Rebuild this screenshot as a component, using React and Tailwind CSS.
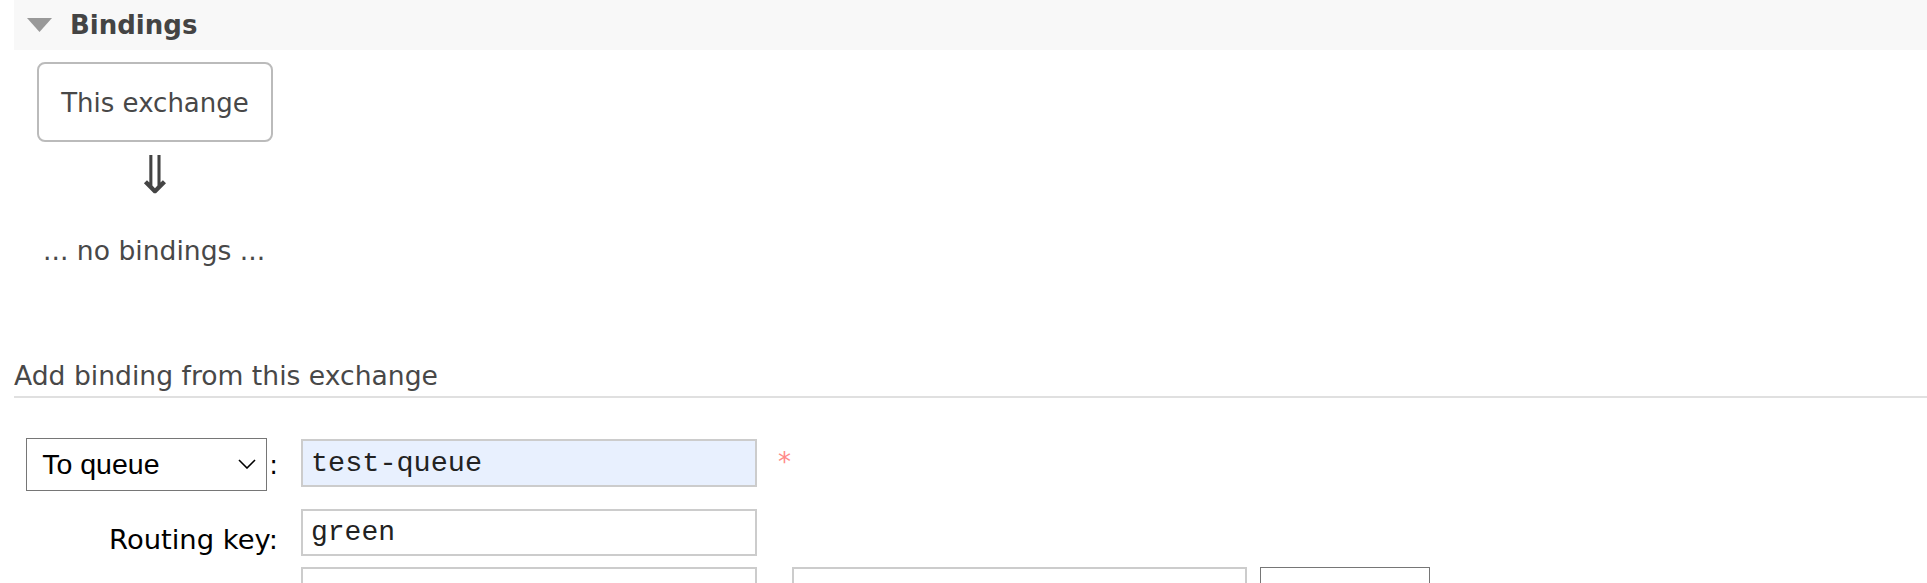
import React, { useState } from 'react';

const Chevron = () => (
  <svg width="18" height="10" viewBox="0 0 18 10" className="pointer-events-none absolute right-[11px] top-[21px]">
    <polyline points="1,1 9,9 17,1" fill="none" stroke="#000" strokeWidth="1.6" />
  </svg>
);

const App = () => {
  const [destType, setDestType] = useState('queue');
  const [destination, setDestination] = useState('test-queue');
  const [routingKey, setRoutingKey] = useState('green');
  const [argKey, setArgKey] = useState('');
  const [argValue, setArgValue] = useState('');

  return (
    <div className="min-h-screen bg-white font-['DejaVu_Sans','Verdana',sans-serif] text-[26px] text-[#484848]">
      <div className="ml-[14px]">
        {/* section header */}
        <h2 className="h-[50px] bg-[#f8f8f8] flex items-center pl-[13px] font-bold text-[#444] leading-[30px]">
          <svg width="25" height="14" viewBox="0 0 25 14">
            <polygon points="0,0 25,0 12.5,14" fill="#999" />
          </svg>
          <span className="ml-[18px]">Bindings</span>
        </h2>

        {/* bindings diagram */}
        <div className="pl-[23px] pt-[12px]">
          <div className="w-[236px] flex flex-col items-center">
            <div className="w-full h-[80px] border-2 border-[#bbb] rounded-[8px] flex items-center justify-center pt-[2px] leading-[30px]">
              This exchange
            </div>
            <div className="h-[66px] flex items-center justify-center text-[52px] leading-none text-[#444]">
              ⇓
            </div>
          </div>
          <p className="ml-[6px] mt-[28px] leading-[30px] text-[26.6px]">... no bindings ...</p>
        </div>

        <h3 className="mt-[95px] pb-[5px] leading-[30px] text-[26.6px] border-b-2 border-[#e0e0e0]">
          Add binding from this exchange
        </h3>

        {/* add binding form */}
        <form className="pl-[12px]" onSubmit={(e) => e.preventDefault()}>
          <div className="flex items-start mt-[40px]">
            <div className="w-[252px] h-[53px] flex items-center justify-end">
              <div className="relative">
                <select
                  value={destType}
                  onChange={(e) => setDestType(e.target.value)}
                  className="appearance-none w-[241px] h-[53px] border border-[#767676] bg-white pl-[15px] font-['Liberation_Sans','Arial',sans-serif] text-[28.5px] text-black outline-none"
                >
                  <option value="queue">To queue</option>
                  <option value="exchange">To exchange</option>
                </select>
                <Chevron />
              </div>
              <span className="ml-[2px] leading-[30px] text-black">:</span>
            </div>
            <input
              value={destination}
              onChange={(e) => setDestination(e.target.value)}
              className="ml-[23px] mt-[1px] w-[456px] h-[48px] border-2 border-[#ccc] bg-[#e8f0fe] pl-[8px] font-['Liberation_Mono','Courier_New',monospace] text-[28.5px] text-[#222] outline-none"
            />
            <span className="ml-[21px] mt-[9px] leading-[30px] text-[#ff8a8a]">*</span>
          </div>

          <div className="flex items-start mt-[18px]">
            <label className="w-[252px] pt-[16px] text-right leading-[30px] text-[27.4px] text-black">Routing key:</label>
            <input
              value={routingKey}
              onChange={(e) => setRoutingKey(e.target.value)}
              className="ml-[23px] w-[456px] h-[47px] border-2 border-[#ccc] bg-white pl-[8px] font-['Liberation_Mono','Courier_New',monospace] text-[28px] text-[#222] outline-none"
            />
          </div>

          <div className="flex items-start mt-[11px]">
            <label className="w-[252px] pt-[20px] text-right leading-[30px] text-[27.4px] text-black">Arguments:</label>
            <input
              value={argKey}
              onChange={(e) => setArgKey(e.target.value)}
              className="ml-[23px] w-[456px] h-[48px] border-2 border-[#ccc] bg-white pl-[8px] font-['Liberation_Mono','Courier_New',monospace] text-[28px] outline-none"
            />
            <span className="w-[35px] mt-[5px] text-center leading-[30px] text-black">=</span>
            <input
              value={argValue}
              onChange={(e) => setArgValue(e.target.value)}
              className="w-[455px] h-[48px] border-2 border-[#ccc] bg-white pl-[8px] font-['Liberation_Mono','Courier_New',monospace] text-[28px] outline-none"
            />
            <select className="ml-[13px] w-[170px] h-[53px] border border-[#767676] bg-white pl-[10px] font-['Liberation_Sans','Arial',sans-serif] text-[28px] text-black">
              <option>String</option>
              <option>Number</option>
              <option>Boolean</option>
              <option>List</option>
            </select>
          </div>
        </form>
      </div>
    </div>
  );
};

export default App;
